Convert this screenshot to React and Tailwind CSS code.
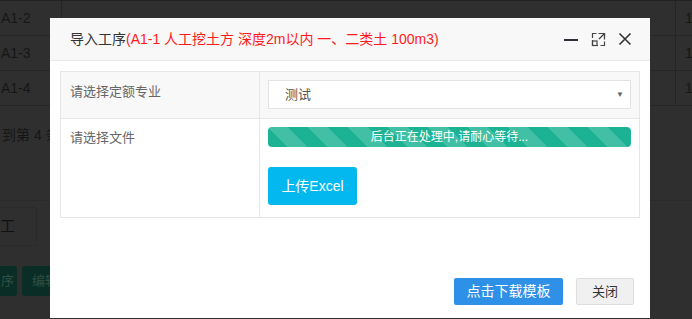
import React from "react";

const font = { fontFamily: '"Liberation Sans", "Noto Sans CJK SC", sans-serif' };

function BgRow({ code }) {
  return (
    <div className="flex h-[35px] border-b border-[#262626]">
      <div className="w-[62px] border-r border-[#262626] flex items-center pl-[1px] text-[14px] text-[#161616]">{code}</div>
      <div className="flex-1" />
      <div className="w-[17px] border-l border-[#262626] flex items-center pl-[9px] text-[14px] text-[#161616]">1</div>
    </div>
  );
}

export default function App() {
  return (
    <div className="relative w-[692px] h-[319px] overflow-hidden bg-[#2f2f2f]" style={font}>
      {/* dimmed background page */}
      <div className="flex flex-col">
        <div className="h-[1px] bg-[#222]" />
        <BgRow code="A1-2" />
        <BgRow code="A1-3" />
        <BgRow code="A1-4" />
        <div className="h-[95px] border-b border-[#2a2a2a] flex items-center text-[14px] text-[#161616] pl-[2px] pb-[35px]">到第 4 条</div>
        <div className="h-[50px] flex items-center">
          <div className="w-[40px] h-[39px] border border-[#2a2a2a] rounded-r-[3px] flex items-center text-[15px] text-[#111] -ml-[3px] pl-[2px]">工</div>
        </div>
        <div className="flex gap-[5px] mt-[15px] -ml-[3px]">
          <div className="w-[20px] h-[30px] rounded-[3px] bg-[#0a2e25] text-[#2f4f47] text-[13px] flex items-center justify-end pr-[3px]">序</div>
          <div className="w-[40px] h-[30px] rounded-[3px] bg-[#0a2e25] text-[#2f4f47] text-[13px] flex items-center pl-[10px]">编辑</div>
        </div>
      </div>

      {/* modal */}
      <div className="absolute left-[50px] top-[18px] w-[600px] h-[300px] bg-white flex flex-col">
        <div className="h-[43px] bg-[#f8f8f8] border-b border-[#eaeaea] flex items-center pl-[20px] pr-[18px]">
          <div className="text-[14px] text-[#333] flex-1 whitespace-nowrap">
            导入工序<span className="text-[#ff1a1a]">(A1-1 人工挖土方 深度2m以内 一、二类土 100m3)</span>
          </div>
          <div className="flex items-center gap-[12px]">
            <svg width="15" height="15" viewBox="0 0 15 15"><line x1="0" y1="8" x2="14" y2="8" stroke="#2f2f3a" strokeWidth="2" /></svg>
            <svg width="15" height="15" viewBox="0 0 15 15" fill="none" stroke="#444" strokeWidth="1.2">
              <path d="M1.5 8v5.5h5.5" />
              <path d="M7.5 1.5h6v6" />
              <path d="M1.5 6V1.5h4" />
              <path d="M13.5 9.5v4h-4" />
              <rect x="1.5" y="9" width="4.5" height="4.5" />
              <path d="M8 7L13.5 1.5" />
              <path d="M10 1.5h3.5V5" />
            </svg>
            <svg width="14" height="14" viewBox="0 0 14 14" stroke="#333" strokeWidth="1.6"><path d="M1.5 1.5l11 11M12.5 1.5l-11 11" /></svg>
          </div>
        </div>

        <div className="px-[10px] pt-[10px]">
          <div className="border border-[#e6e6e6] flex flex-col">
            <div className="flex h-[47px] bg-[#f8f8f8] border-b border-[#e6e6e6]">
              <div className="w-[199px] border-r border-[#e6e6e6] pl-[9px] pt-[10px] text-[13px] text-[#666]">请选择定额专业</div>
              <div className="flex-1 pl-[8px] pr-[8px] pt-[8px]">
                <div className="h-[29px] bg-white border border-[#e3e3e3] flex items-center pl-[16px] pr-[6px] text-[13px] text-[#555]">
                  <span className="flex-1">测试</span>
                  <span className="text-[8px] text-[#666]">▼</span>
                </div>
              </div>
            </div>
            <div className="flex h-[98px]">
              <div className="w-[199px] border-r border-[#e6e6e6] pl-[9px] pt-[9px] text-[13px] text-[#666]">请选择文件</div>
              <div className="flex-1 pl-[8px] pr-[8px] pt-[8px] flex flex-col items-start">
                <div
                  className="w-full h-[20px] rounded-[4px] bg-[#1cb394] flex items-center justify-center text-white text-[12px]"
                  style={{ backgroundImage: "linear-gradient(45deg, rgba(255,255,255,.17) 25%, transparent 25%, transparent 50%, rgba(255,255,255,.17) 50%, rgba(255,255,255,.17) 75%, transparent 75%, transparent)", backgroundSize: "40px 40px" }}
                >
                  后台正在处理中,请耐心等待...
                </div>
                <div className="mt-[20px] w-[89px] h-[38px] rounded-[3px] bg-[#02b8ef] text-white text-[14px] flex items-center justify-center">上传Excel</div>
              </div>
            </div>
          </div>
        </div>

        <div className="flex-1" />
        <div className="flex justify-end gap-[13px] pr-[16px] pb-[13px]">
          <div className="w-[109px] h-[27px] rounded-[2px] bg-[#2f90e8] text-white text-[14px] flex items-center justify-center">点击下载模板</div>
          <div className="w-[58px] h-[27px] rounded-[2px] bg-[#f0f0f0] border border-[#dedede] text-[#333] text-[13px] flex items-center justify-center">关闭</div>
        </div>
      </div>
    </div>
  );
}
